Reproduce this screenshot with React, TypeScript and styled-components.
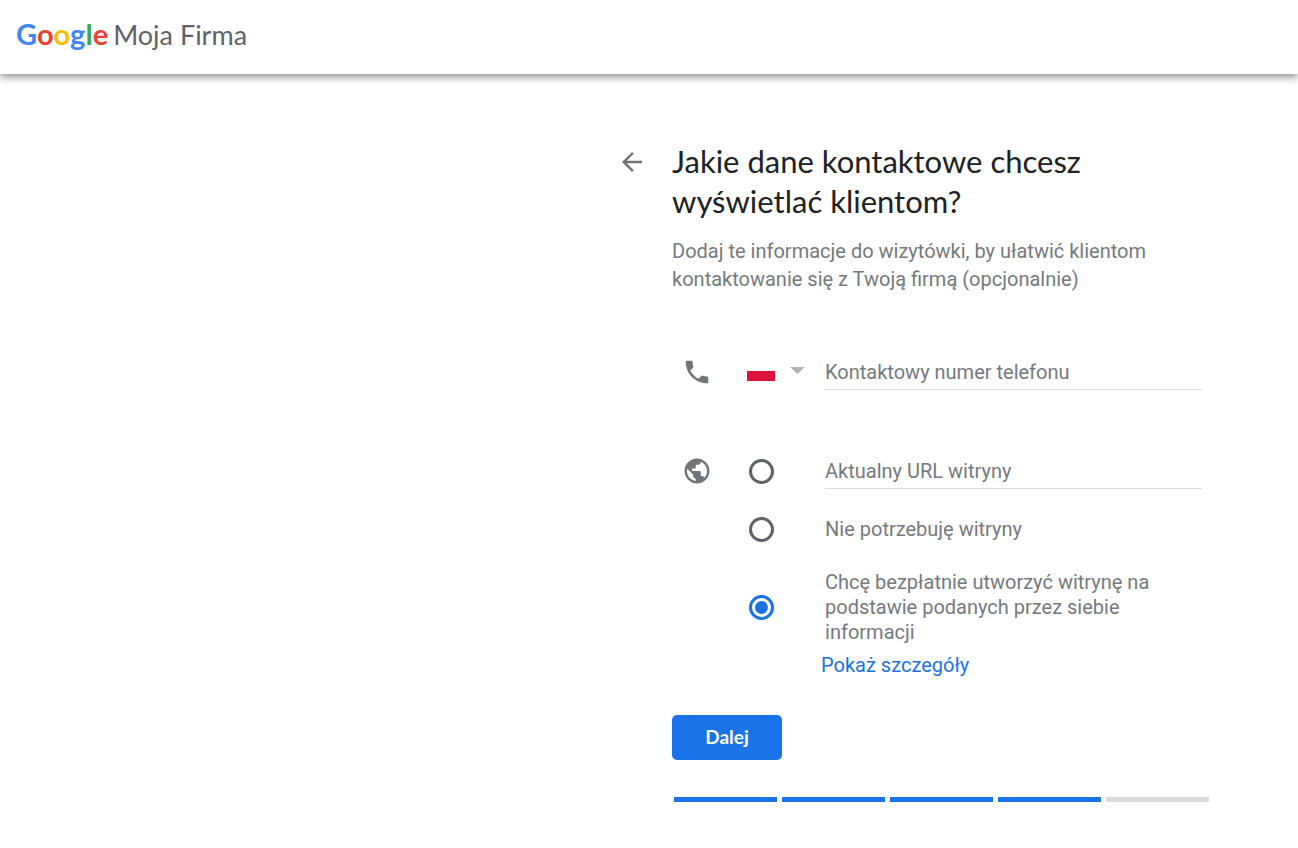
import React, { useState } from "react";
import styled, { createGlobalStyle } from "styled-components";

const GlobalStyle = createGlobalStyle`
  *, *::before, *::after { box-sizing: border-box; }
  body {
    margin: 0;
    background: #fff;
    color: #757a7f;
    font-family: Roboto, "Liberation Sans", sans-serif;
    font-size: 20px;
    line-height: 25px;
  }
`;

const Header = styled.header`
  display: flex;
  align-items: center;
  height: 74px;
  padding: 0 16px 6px;
  box-shadow: 0 3px 8px rgba(0, 0, 0, 0.45);
`;

const Brand = styled.a`
  display: flex;
  align-items: baseline;
  gap: 5px;
  color: #5f6368;
  font-family: Lato, sans-serif;
  font-size: 27px;
  line-height: 40px;
  text-decoration: none;
`;

const Wordmark = styled.span`
  font-size: 29px;
  font-weight: 700;
`;

const Letter = styled.span<{ $color: string }>`
  color: ${({ $color }) => $color};
`;

const Main = styled.main`
  display: flex;
  align-items: flex-start;
  gap: 18px;
  margin-left: 47%;
  padding: 67px 16px 44px 0;
`;

const BackButton = styled.button`
  display: grid;
  flex: none;
  place-items: center;
  width: 44px;
  height: 42px;
  padding: 0;
  border: 0;
  background: none;
  color: #757575;
  cursor: pointer;
`;

const Content = styled.form`
  flex: 1;
  min-width: 0;
  max-width: 537px;
`;

const Title = styled.h1`
  margin: 0;
  color: #202124;
  font-family: Lato, sans-serif;
  font-size: 31px;
  font-weight: 400;
  line-height: 40px;
`;

const Intro = styled.p`
  margin: 16px 0 61px;
  line-height: 28px;
`;

const Row = styled.div`
  display: grid;
  grid-template-columns: 50px 103px minmax(0, 1fr);
  align-items: center;
  padding-right: 7px;
`;

const Options = styled.fieldset`
  display: flex;
  flex-direction: column;
  gap: 28px;
  min-width: 0;
  margin: 63px 0 0;
  padding: 0;
  border: 0;
`;

const IconCell = styled.span`
  display: grid;
  place-items: center;
  color: #70757a;
`;

const Country = styled.label`
  position: relative;
  display: flex;
  align-items: center;
  justify-self: start;
  gap: 15px;
  margin: 0 0 3px 25px;
`;

const CountrySelect = styled.select`
  position: absolute;
  inset: 0;
  width: 100%;
  opacity: 0;
  cursor: pointer;
`;

const Flag = styled.span`
  width: 28px;
  height: 20px;
  background: linear-gradient(#fff 50%, #dc143c 50%);
`;

const Field = styled.input`
  width: 100%;
  height: 36px;
  padding: 0;
  border: 0;
  border-bottom: 1px solid #dadce0;
  border-radius: 0;
  outline: 0;
  background: none;
  color: #202124;
  font: inherit;

  &::placeholder {
    color: #757a7f;
    opacity: 1;
  }
`;

const Radio = styled.input`
  display: grid;
  place-items: center;
  appearance: none;
  width: 25px;
  height: 25px;
  margin: 0 0 0 27px;
  border: 3px solid #5f6368;
  border-radius: 50%;
  cursor: pointer;

  &:checked { border-color: #1a73e8; }

  &:checked::before {
    content: "";
    width: 13px;
    height: 13px;
    border-radius: 50%;
    background: #1a73e8;
  }
`;

const OptionLabel = styled.label`
  max-width: 350px;
`;

const DetailsLink = styled.a`
  display: block;
  width: fit-content;
  margin: 8px 0 0 149px;
  color: #1a73e8;
  text-decoration: none;
`;

const NextButton = styled.button`
  display: block;
  width: 110px;
  height: 45px;
  margin-top: 37px;
  padding: 0 0 2px;
  border: 0;
  border-radius: 5px;
  background: #1a73e8;
  color: #fff;
  font-family: Lato, sans-serif;
  font-size: 19px;
  font-weight: 700;
  cursor: pointer;
`;

const Progress = styled.div`
  display: flex;
  gap: 5px;
  margin-top: 37px;
  padding-left: 2px;
`;

const Step = styled.span<{ $done: boolean }>`
  flex: 1;
  height: 5px;
  background: ${({ $done }) => ($done ? "#1a73e8" : "#dadce0")};
`;

const Icon = ({ d }: { d: string }) => (
  <svg width="30" height="30" viewBox="0 0 24 24" fill="currentColor" aria-hidden="true">
    <path d={d} />
  </svg>
);

const ARROW_BACK = "M20 11H7.83l5.59-5.59L12 4l-8 8 8 8 1.41-1.41L7.83 13H20v-2z";
const PHONE =
  "M6.62 10.79c1.44 2.83 3.76 5.14 6.59 6.59l2.2-2.2c.27-.27.67-.36 1.02-.24 1.12.37 2.33.57 3.57.57.55 0 1 .45 1 1V20c0 .55-.45 1-1 1-9.39 0-17-7.61-17-17 0-.55.45-1 1-1h3.5c.55 0 1 .45 1 1 0 1.25.2 2.45.57 3.57.11.35.03.74-.25 1.02l-2.2 2.2z";
const GLOBE =
  "M12 2C6.48 2 2 6.48 2 12s4.48 10 10 10 10-4.48 10-10S17.52 2 12 2zm-1 17.93c-3.95-.49-7-3.85-7-7.93 0-.62.08-1.21.21-1.79L9 15v1c0 1.1.9 2 2 2v1.93zm6.9-2.54c-.26-.81-1-1.39-1.9-1.39h-1v-3c0-.55-.45-1-1-1H8v-2h2c.55 0 1-.45 1-1V7h2c1.1 0 2-.9 2-2v-.41c2.93 1.19 5 4.06 5 7.41 0 2.08-.8 3.97-2.1 5.39z";

const BRAND_LETTERS = [
  ["G", "#4285f4"],
  ["o", "#ea4335"],
  ["o", "#fbbc04"],
  ["g", "#4285f4"],
  ["l", "#34a853"],
  ["e", "#ea4335"],
];

const STEPS = [true, true, true, true, false];

export default function App() {
  const [site, setSite] = useState("create");
  const radio = (value: string) => ({
    type: "radio",
    name: "site",
    id: `site-${value}`,
    value,
    checked: site === value,
    onChange: () => setSite(value),
  });

  return (
    <>
      <GlobalStyle />
      <Header>
        <Brand href="#">
          <Wordmark>
            {BRAND_LETTERS.map(([char, color], i) => (
              <Letter key={i} $color={color}>{char}</Letter>
            ))}
          </Wordmark>
          <span>Moja Firma</span>
        </Brand>
      </Header>
      <Main>
        <BackButton type="button" aria-label="Wstecz">
          <Icon d={ARROW_BACK} />
        </BackButton>
        <Content onSubmit={(e) => e.preventDefault()}>
          <Title>Jakie dane kontaktowe chcesz wyświetlać klientom?</Title>
          <Intro>
            Dodaj te informacje do wizytówki, by ułatwić klientom kontaktowanie się z Twoją firmą (opcjonalnie)
          </Intro>
          <Row>
            <IconCell><Icon d={PHONE} /></IconCell>
            <Country>
              <Flag />
              <svg width="15" height="7" viewBox="0 0 15 7" fill="#b3b3b3" aria-hidden="true">
                <path d="M0 0h15L7.500 7z" />
              </svg>
              <CountrySelect aria-label="Kraj" defaultValue="PL">
                <option value="PL">PL</option>
              </CountrySelect>
            </Country>
            <Field type="tel" aria-label="Kontaktowy numer telefonu" placeholder="Kontaktowy numer telefonu" />
          </Row>
          <Options aria-label="Witryna">
            <Row>
              <IconCell><Icon d={GLOBE} /></IconCell>
              <Radio {...radio("current")} aria-label="Aktualny URL witryny" />
              <Field type="url" aria-label="Aktualny URL witryny" placeholder="Aktualny URL witryny" />
            </Row>
            <Row>
              <span />
              <Radio {...radio("none")} />
              <OptionLabel htmlFor="site-none">Nie potrzebuję witryny</OptionLabel>
            </Row>
            <Row>
              <span />
              <Radio {...radio("create")} />
              <OptionLabel htmlFor="site-create">
                Chcę bezpłatnie utworzyć witrynę na podstawie podanych przez siebie informacji
              </OptionLabel>
            </Row>
          </Options>
          <DetailsLink href="#">Pokaż szczegóły</DetailsLink>
          <NextButton type="submit">Dalej</NextButton>
          <Progress role="progressbar" aria-label="Postęp" aria-valuemin={0} aria-valuemax={5} aria-valuenow={4}>
            {STEPS.map((done, i) => (
              <Step key={i} $done={done} />
            ))}
          </Progress>
        </Content>
      </Main>
    </>
  );
}
